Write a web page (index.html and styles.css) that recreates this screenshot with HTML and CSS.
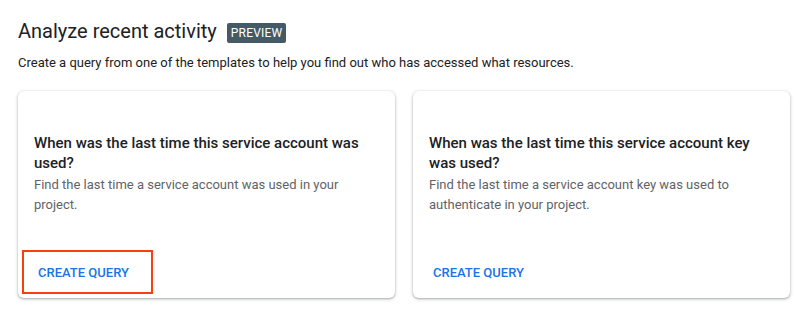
FILE: index.html
```html
<!DOCTYPE html>
<html lang="en">
<head>
    <meta charset="UTF-8">
    <meta name="viewport" content="width=device-width, initial-scale=1.0">
    <title>Analyze recent activity</title>
    <link rel="stylesheet" href="styles.css">
</head>
<body>
    <div class="page">
        <div class="header">
            <h1>Analyze recent activity</h1>
            <span class="badge">PREVIEW</span>
        </div>
        <p class="subtitle">Create a query from one of the templates to help you find out who has accessed what resources.</p>

        <div class="cards">
            <div class="card">
                <div class="card-body">
                    <h3>When was the last time this service account was used?</h3>
                    <p>Find the last time a service account was used in your project.</p>
                </div>
                <div class="card-actions">
                    <button type="button">CREATE QUERY</button>
                </div>
                <div class="highlight"></div>
            </div>
            <div class="card">
                <div class="card-body">
                    <h3>When was the last time this service account key was used?</h3>
                    <p>Find the last time a service account key was used to authenticate in your project.</p>
                </div>
                <div class="card-actions">
                    <button type="button">CREATE QUERY</button>
                </div>
            </div>
        </div>
    </div>
</body>
</html>
```

FILE: styles.css
```css
body {
    margin: 0;
    background-color: #fff;
    font-family: Roboto, "Liberation Sans", Arial, sans-serif;
    color: #202124;
}
.page {
    padding: 17px 18px;
}
.header {
    display: flex;
    align-items: center;
    gap: 10px;
    height: 28px;
}
.header h1 {
    margin: 0;
    font-size: 20px;
    font-weight: 400;
    line-height: 28px;
}
.badge {
    margin-top: 4px;
    background-color: #455a64;
    color: #fff;
    font-size: 12px;
    line-height: 20px;
    padding: 0 4px;
    border-radius: 2px;
    letter-spacing: 0.2px;
}
.subtitle {
    margin: 8px 0 0;
    font-size: 13px;
    line-height: 20px;
}
.cards {
    display: grid;
    grid-template-columns: 1fr 1fr;
    gap: 18px;
    width: 772px;
    margin-top: 18px;
}
.card {
    position: relative;
    display: flex;
    flex-direction: column;
    height: 207px;
    border-radius: 6px;
    box-shadow: 0 1px 2px 0 rgba(60, 64, 67, 0.3), 0 1px 3px 1px rgba(60, 64, 67, 0.15);
}
.card-body {
    padding: 42px 16px 0;
}
.card-body h3 {
    margin: 0 0 2px;
    font-size: 15px;
    font-weight: 500;
    line-height: 20px;
}
.card-body p {
    margin: 0;
    font-size: 13px;
    line-height: 20px;
    color: #5f6368;
}
.card-actions {
    margin-top: auto;
    padding: 8px 12px;
}
.card-actions button {
    height: 36px;
    padding: 0 8px;
    border: none;
    background: none;
    font-family: inherit;
    font-size: 13px;
    font-weight: 500;
    color: #1a73e8;
    cursor: pointer;
}
.highlight {
    position: absolute;
    left: 4px;
    top: 159px;
    width: 131px;
    height: 44px;
    box-sizing: border-box;
    border: 2px solid #fc3d0c;
}
```
